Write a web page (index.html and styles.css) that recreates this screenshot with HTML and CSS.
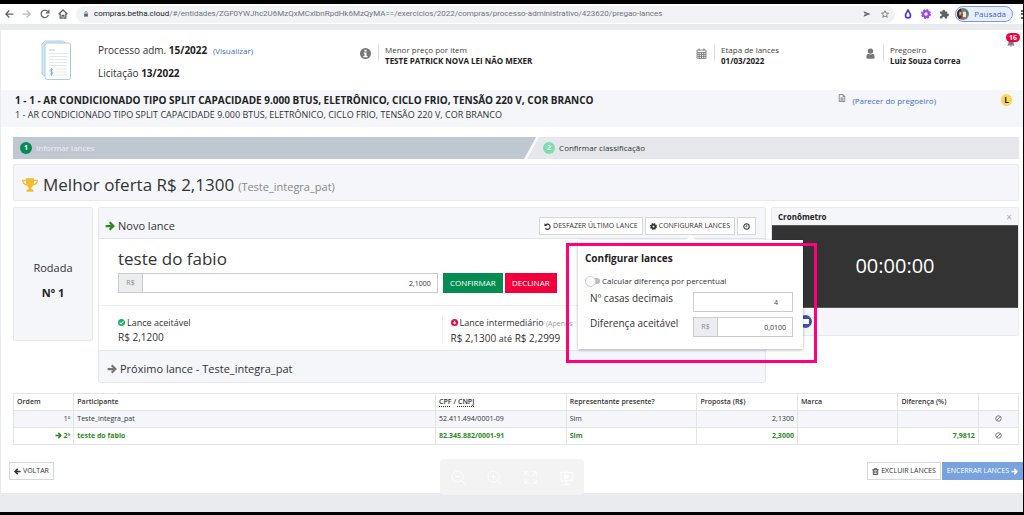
FILE: index.html
```html
<!DOCTYPE html>
<html lang="pt-BR">
<head>
<meta charset="utf-8">
<meta name="viewport" content="width=device-width, initial-scale=1">
<title>Pregão - Lances</title>
<link rel="stylesheet" href="styles.css">
</head>
<body>
<svg class="sprite" aria-hidden="true">
  <symbol id="arrow" viewBox="0 0 16 16"><path d="M1 8h12M7.500 2l6 6-6 6" fill="none" stroke="currentColor" stroke-width="3.600"/></symbol>
  <symbol id="ban" viewBox="0 0 16 16"><circle cx="8" cy="8" r="6.200" fill="none" stroke="currentColor" stroke-width="2"/><path d="M3.800 12.200l8.400-8.400" stroke="currentColor" stroke-width="2"/></symbol>
</svg>

<div class="browser">
  <button class="nav" aria-label="Voltar página"><svg viewBox="0 0 16 16"><path d="M15 8H3M8.500 2.500L3 8l5.500 5.500"/></svg></button>
  <button class="nav nav-off" aria-label="Avançar página"><svg viewBox="0 0 16 16"><path d="M1 8h12M7.500 2.500L13 8l-5.500 5.500"/></svg></button>
  <button class="nav" aria-label="Recarregar"><svg viewBox="0 0 16 16"><path d="M13.500 9.500A6 6 0 1 1 12.300 3.800L14 5.500M14.200 1v5H9.200"/></svg></button>
  <button class="nav" aria-label="Início"><svg viewBox="0 0 16 16"><path d="M1 8.500L8 1.500l7 7M3.500 7v7.500h3V10h3v4.500h3V7"/></svg></button>
  <div class="address">
    <svg class="lock" viewBox="0 0 16 16"><path d="M3 7h10v8H3z" fill="currentColor"/><path d="M5 7V4.500a3 3 0 0 1 6 0V7" fill="none" stroke="currentColor" stroke-width="1.800"/></svg>
    <span class="url"><span class="host">compras.betha.cloud</span>/#/entidades/ZGF0YWJhc2U6MzQxMCxlbnRpdHk6MzQyMA==/exercicios/2022/compras/processo-administrativo/423620/pregao-lances</span>
    <svg class="send" viewBox="0 0 16 16"><path d="M1 2.500L15 8 1 13.500 3 9l6-1-6-1z" fill="currentColor"/></svg>
    <svg class="star" viewBox="0 0 16 16"><path d="M8 1.500l2 4.600 5 .4-3.800 3.300 1.200 4.900L8 12.100l-4.400 2.600 1.200-4.900L1 6.500l5-.4z" fill="none" stroke="currentColor" stroke-width="1.500"/></svg>
  </div>
  <svg class="ext drop" viewBox="0 0 16 16"><path d="M8 2C6 5.500 4 7.500 4 10.200a4 4 0 0 0 8 0C12 7.500 10 5.500 8 2z" fill="none" stroke="currentColor" stroke-width="2.600"/></svg>
  <svg class="ext flower" viewBox="0 0 16 16"><circle cx="8" cy="8" r="4.500" fill="none" stroke="currentColor" stroke-width="3.400"/><circle cx="8" cy="8" r="6.600" fill="none" stroke="currentColor" stroke-width="2.600" stroke-dasharray="3.200 1.980"/></svg>
  <svg class="ext puzzle" viewBox="0 0 16 16"><path d="M1.500 4h4a2.200 2.200 0 1 1 4.200 0H13v3.500a2.200 2.200 0 1 1 0 4.200V15H9.300a2 2 0 1 0-3.800 0h-4v-3.800a2 2 0 1 0 0-3.700z" fill="currentColor"/></svg>
  <button class="profile"><svg viewBox="0 0 16 16"><circle cx="8" cy="8" r="8" fill="#76806b"/><path d="M0 8a8 8 0 0 1 5-7.400L7 9 4 15A8 8 0 0 1 0 8z" fill="#3d2b2b"/><path d="M3 5h3v5H3z" fill="#d9b3a0"/><path d="M8 5h4v7H8z" fill="#e9e9df"/><path d="M5 8h2v6H5z" fill="#a92c35"/><path d="M11 2l4 4-2 3z" fill="#4b7a3a"/></svg>Pausada</button>
  <span class="more" aria-hidden="true"></span>
</div>

<main class="page">
  <header class="summary">
    <div class="process">
      <svg class="doc" viewBox="0 0 30 40"><path d="M1 4l3-3h18.500l3 3v32H3.500L1 34z" fill="#d3e6f2" stroke="#b3d3e8"/><rect x="4" y="3" width="25.500" height="36.500" rx="2" fill="#fff" stroke="#a8cdee"/><path d="M8 10h6" stroke="#a8c8f0"/><path d="M8 13.500h18M8 16.500h18M8 19.500h18M8 22.500h18M8 25.500h18M15 29h11M15 32h11M15 35h11" stroke="#e3e7e9"/><path d="M12 29.500q-3-1-3 .9 0 1.300 1.500 1.400 1.800.2 1.500 1.600-.6 1.600-3.200.6M10.500 28v8" fill="none" stroke="#8ab9e8"/></svg>
      <div class="process-text">
        <div>Processo adm. <b>15/2022</b> <a class="view" href="#visualizar">(Visualizar)</a></div>
        <div>Licitação <b>13/2022</b></div>
      </div>
    </div>
    <div class="fact">
      <svg viewBox="0 0 16 16"><circle cx="8" cy="8" r="8" fill="#777"/><path d="M6.500 2.500h3v2.500h-3zM5.500 6.500h4v5h1.500v2h-6v-2h1.500v-3H5.500z" fill="#fff"/></svg>
      <div class="fact-text">Menor preço por item<b>TESTE PATRICK NOVA LEI NÃO MEXER</b></div>
    </div>
    <div class="fact">
      <svg viewBox="0 0 16 16"><path d="M1.500 3h13v12h-13zM1.500 6.500h13M1.500 9.300h13M1.500 12.100h13M4.700 6.500V15M8 6.500V15M11.300 6.500V15M4.500.500V4M11.500.500V4" fill="none" stroke="#777" stroke-width="1.300"/></svg>
      <div class="fact-text">Etapa de lances<b>01/03/2022</b></div>
    </div>
    <div class="fact">
      <svg viewBox="0 0 16 16"><circle cx="8" cy="4.500" r="3.900" fill="#777"/><path d="M2 14.500c0-4 .8-6 3-6.200q3 2 6 0c2.200.2 3 2.200 3 6.200q-1 1-2 1H4q-1.500 0-2-1z" fill="#777"/></svg>
      <div class="fact-text">Pregoeiro<b>Luiz Souza Correa</b></div>
    </div>
    <button class="bell" aria-label="Notificações"><svg viewBox="0 0 16 16"><path d="M8 1c4 0 5 3 5 6s1 4 2.500 6H.500C2 11 3 10 3 7s1-6 5-6zM6 14h4q-2 3-4 0z" fill="#777"/></svg><span class="count">16</span></button>
  </header>

  <section class="item">
    <div>
      <h1>1 - 1 - AR CONDICIONADO TIPO SPLIT CAPACIDADE 9.000 BTUS, ELETRÔNICO, CICLO FRIO, TENSÃO 220 V, COR BRANCO</h1>
      <p>1 - AR CONDICIONADO TIPO SPLIT CAPACIDADE 9.000 BTUS, ELETRÔNICO, CICLO FRIO, TENSÃO 220 V, COR BRANCO</p>
    </div>
    <div class="item-side">
      <svg viewBox="0 0 16 16"><path d="M2.500 1h7.500l3.500 3.500V15h-11zM10 1v4h3.500M5 8h6M5 10.200h6M5 12.400h6" fill="none" stroke="#777" stroke-width="1.600"/></svg>
      <a href="#parecer">(Parecer do pregoeiro)</a>
      <span class="tag">L</span>
    </div>
  </section>

  <div class="content">
    <ol class="steps">
      <li class="step step-now"><span class="num">1</span>Informar lances</li>
      <li class="step step-next"><span class="num">2</span>Confirmar classificação</li>
    </ol>

    <section class="best">
      <svg viewBox="0 0 18 16"><path d="M4.500.500h9V2H18c0 4-2 6-5.500 6.500C11.500 10 10.500 10.500 10.300 12q.2 1 1.700 1.200 1 .3 1 2.300H5q0-2 1-2.300 1.500-.2 1.700-1.200C7.500 10.500 6.500 10 5.500 8.500 2 8 0 6 0 2h4.500zM1.500 3.500q.5 2.700 3.300 3.300-.4-1.500-.4-3.300zM16.500 3.500h-2.900q0 1.800-.4 3.300 2.800-.6 3.300-3.300z" fill="#f4bd2c"/></svg>
      <span>Melhor oferta R$ 2,1300</span> <small>(Teste_integra_pat)</small>
    </section>

    <div class="board">
      <aside class="round"><span>Rodada</span><b>Nº 1</b></aside>

      <section class="bid">
        <header class="bid-head">
          <h2><svg class="go"><use href="#arrow"/></svg>Novo lance</h2>
          <div class="tools">
            <button class="btn"><svg viewBox="0 0 16 16"><path d="M3.500 4.500A6 6 0 1 1 3 12" fill="none" stroke="currentColor" stroke-width="2.600"/><path d="M1 .500V7h6.500z" fill="currentColor"/></svg>DESFAZER ÚLTIMO LANCE</button>
            <div class="anchor">
              <button class="btn" aria-expanded="true"><svg viewBox="0 0 16 16"><circle cx="8" cy="8" r="4.200" fill="none" stroke="currentColor" stroke-width="4"/><circle cx="8" cy="8" r="6.800" fill="none" stroke="currentColor" stroke-width="2.400" stroke-dasharray="3 2.340"/></svg>CONFIGURAR LANCES</button>
              <div class="popover" role="dialog" aria-labelledby="cfg">
                <h3 id="cfg">Configurar lances</h3>
                <label class="switch"><input type="checkbox">Calcular diferença por percentual</label>
                <div class="field"><label for="decimals">Nº casas decimais</label><input class="box decimals" id="decimals" value="4"></div>
                <div class="field"><label for="diff">Diferença aceitável</label><span class="group"><span class="prefix">R$</span><input class="box" id="diff" value="0,0100"></span></div>
                <span class="marker"></span>
              </div>
            </div>
            <button class="btn btn-icon" aria-label="Histórico"><svg viewBox="0 0 16 16"><circle cx="8" cy="8" r="6.200" fill="none" stroke="currentColor" stroke-width="2.400"/><path d="M8.500 4v4.500H5.500" fill="none" stroke="currentColor" stroke-width="1.800"/></svg></button>
          </div>
        </header>
        <form class="bid-form">
          <label for="bid">teste do fabio</label>
          <div class="bid-row">
            <span class="group"><span class="prefix">R$</span><input class="box" id="bid" value="2,1000"></span>
            <button type="button" class="act act-ok">CONFIRMAR</button>
            <button type="button" class="act act-no">DECLINAR</button>
          </div>
        </form>
        <div class="limits">
          <div class="limit">
            <div><svg viewBox="0 0 16 16"><circle cx="8" cy="8" r="8" fill="#19b56b"/><path d="M4 8l3 3 5.500-5.500" fill="none" stroke="#fff" stroke-width="2.400"/></svg>Lance aceitável</div>
            <div class="amount">R$ 2,1200</div>
          </div>
          <div class="limit limit-mid">
            <div><svg viewBox="0 0 16 16"><circle cx="8" cy="8" r="8" fill="#f0003c"/><path d="M8 12.500L3.500 8h3V4h3v4h3z" fill="#fff"/></svg>Lance intermediário <small>(Apenas</small></div>
            <div class="amount">R$ 2,1300 <span>até</span> R$ 2,2999</div>
          </div>
        </div>
        <footer class="bid-next"><svg><use href="#arrow"/></svg>Próximo lance - Teste_integra_pat</footer>
      </section>

      <section class="timer">
        <header><b>Cronômetro</b><button class="close" aria-label="Fechar">×</button></header>
        <div class="clock">00:00:00</div>
        <footer><button class="stop" aria-label="Parar"><svg viewBox="0 0 13 13"><circle cx="6.500" cy="6.500" r="6.500" fill="#3f51b5"/><rect x="3" y="4" width="7" height="5" fill="#fff"/></svg></button></footer>
      </section>
    </div>

    <table class="ranking">
      <colgroup><col class="c-order"><col class="c-name"><col class="c-doc"><col class="c-rep"><col class="c-prop"><col class="c-brand"><col class="c-diff"><col class="c-act"></colgroup>
      <thead><tr><th>Ordem</th><th>Participante</th><th><abbr title="Cadastro de Pessoas Físicas">CPF</abbr> / <abbr title="Cadastro Nacional da Pessoa Jurídica">CNPJ</abbr></th><th>Representante presente?</th><th>Proposta (R$)</th><th>Marca</th><th>Diferença (%)</th><th></th></tr></thead>
      <tbody>
        <tr><td class="r">1º</td><td>Teste_integra_pat</td><td>52.411.494/0001-09</td><td>Sim</td><td class="r">2,1300</td><td></td><td></td><td class="ban"><svg><use href="#ban"/></svg></td></tr>
        <tr class="current"><td class="r"><svg><use href="#arrow"/></svg> 2º</td><td>teste do fabio</td><td>82.345.882/0001-91</td><td>Sim</td><td class="r">2,3000</td><td></td><td class="r">7,9812</td><td class="ban"><svg><use href="#ban"/></svg></td></tr>
      </tbody>
    </table>
  </div>

  <footer class="actions">
    <button class="btn"><svg class="flip"><use href="#arrow"/></svg>VOLTAR</button>
    <div class="actions-end">
      <button class="btn"><svg viewBox="0 0 16 16"><path d="M1 4h14M5.500 4V1.500h5V4M3 4v11h10V4M6.300 6.500v6M9.700 6.500v6" fill="none" stroke="currentColor" stroke-width="1.900"/></svg>EXCLUIR LANCES</button>
      <button class="btn btn-blue">ENCERRAR LANCES<svg><use href="#arrow"/></svg></button>
    </div>
  </footer>
</main>

<div class="viewer">
  <button aria-label="Diminuir zoom"><svg viewBox="0 0 16 16"><circle cx="7" cy="7" r="6"/><path d="M11.500 11.500l4 4M4 7h6"/></svg></button>
  <button aria-label="Aumentar zoom"><svg viewBox="0 0 16 16"><circle cx="7" cy="7" r="6"/><path d="M11.500 11.500l4 4M4 7h6M7 4v6"/></svg></button>
  <button aria-label="Tela cheia"><svg viewBox="0 0 16 16"><path d="M2 6V2h4M2 2l4 4M10 2h4v4M14 2l-4 4M2 10v4h4M2 14l4-4M14 10v4h-4M14 14l-4-4"/></svg></button>
  <button aria-label="Apresentar"><svg viewBox="0 0 16 16"><path d="M1 2.500h14M2 2.500v9h12v-9M8 .500v2M8 11.500v4M4.500 15.500h7"/><path class="solid" d="M6 4.500v5L10.500 7z"/></svg></button>
</div>
</body>
</html>
```
FILE: styles.css
```css
* { box-sizing: border-box; }

body {
  margin: 0;
  min-height: 100vh;
  display: flex;
  flex-direction: column;
  border: solid #000;
  border-width: 4px 1px 3px 0;
  background: #e9ebef;
  color: #333;
  font: 10px/14px "Open Sans", "Noto Sans", sans-serif;
}

button, input { font: inherit; color: inherit; }
button { border: 0; padding: 0; background: none; cursor: pointer; }
h1, h2, h3, p, ol { margin: 0; padding: 0; font-weight: 400; }
a { color: #3f6fc4; text-decoration: none; }
b { color: #222; }
svg { flex: none; }
.sprite { position: absolute; width: 0; height: 0; }

/* Browser bar */
.browser {
  display: flex;
  align-items: center;
  height: 20px;
  padding-left: 4px;
  background: #fff;
  color: #5f6368;
}
.nav { width: 18px; height: 10px; display: flex; justify-content: flex-start; }
.nav svg { width: 10px; height: 10px; fill: none; stroke: currentColor; stroke-width: 2; }
.nav-off { color: #bbb; }
.address {
  flex: 1;
  display: flex;
  align-items: center;
  gap: 10px;
  height: 17px;
  padding: 0 6px 0 7px;
  border-radius: 9px;
  background: #f1f3f4;
  font: 8px/16px Roboto, "Open Sans", sans-serif;
}
.lock { width: 6px; height: 8px; margin-right: -5px; }
.url { flex: 1; overflow: hidden; white-space: nowrap; color: #70757a; }
.host { color: #202124; }
.send, .star { width: 8px; height: 8px; }
.ext { width: 10px; height: 10px; margin-left: 8px; }
.drop { color: #4a2be0; }
.flower { color: #a144f0; }
.profile {
  display: flex;
  align-items: center;
  gap: 5px;
  height: 16px;
  margin: 0 8px 0 6px;
  padding: 0 6px 0 1px;
  border: 1px solid #7d9be0;
  border-radius: 8px;
  background: #e8effc;
  color: #4464cf;
  font-size: 8px;
}
.profile svg { width: 12px; height: 12px; }
.more { width: 2px; border-left: 2px dotted #5f6368; height: 9px; }

/* Page */
.page { margin: 6px 0 0 1px; background: #fff; }

.summary {
  position: relative;
  display: grid;
  grid-template-columns: 359fr 336fr 169fr 158fr;
  height: 60px;
}
.process { display: flex; gap: 27px; padding: 10px 0 0 40px; }
.doc { width: 30px; height: 40px; }
.process-text { display: grid; align-content: start; gap: 8px; padding-top: 3px; font-size: 10px; }
.view { margin-left: 3px; font-size: 8px; }
.fact { display: flex; align-items: flex-start; gap: 7px; padding-top: 14px; }
.fact svg { width: 11px; height: 11px; margin-top: 4px; }
.fact-text { padding-left: 6px; border-left: 1px solid #ddd; font-size: 8px; line-height: 11px; height: 17px; color: #444; }
.fact-text b { display: block; }
.bell { position: absolute; top: 3px; right: 3px; width: 14px; height: 14px; }
.bell svg { position: absolute; left: 1px; bottom: 0; width: 8px; height: 8px; }
.count {
  position: absolute;
  top: 0;
  right: 0;
  padding: 0 3px;
  border-radius: 5px;
  background: #f0003c;
  color: #fff;
  font-size: 7px;
  line-height: 9px;
  font-weight: 700;
}

.item {
  display: flex;
  justify-content: space-between;
  padding: 3px 11px 5px 14px;
  background: #f4f6fa;
}
.item h1 { font-size: 10px; line-height: 15px; font-weight: 700; color: #222; }
.item p { font-size: 9px; line-height: 14px; }
.item-side { display: flex; align-items: flex-start; padding-top: 1px; font-size: 8px; }
.item-side svg { width: 8px; height: 8px; margin-right: 6px; }
.tag {
  width: 11px;
  height: 12px;
  margin-left: 65px;
  border-radius: 6px;
  background: #fbd55e;
  color: #222;
  font-weight: 700;
  line-height: 12px;
  text-align: center;
}

.content { padding: 10px 4px 0 12px; }

.steps { display: flex; height: 22px; list-style: none; background: #f8f9fb; font-size: 8px; }
.step { display: flex; align-items: center; gap: 4px; }
.step-now {
  flex: 0 0 52%;
  padding-left: 7px;
  background: #bfc7d1;
  color: #edf0f3;
  clip-path: polygon(0 0, 100% 0, calc(100% - 12px) 100%, 0 100%);
}
.step-next {
  flex: 1;
  padding-left: 19px;
  margin-left: -12px;
  background: #e5e7ec;
  clip-path: polygon(15px 0, 100% 0, 100% 100%, 3px 100%);
}
.num {
  width: 12px;
  height: 12px;
  border-radius: 50%;
  background: #058c56;
  color: #fff;
  font-size: 7px;
  line-height: 12px;
  font-weight: 700;
  text-align: center;
}
.step-next .num { background: #7ddfaa; }

.best, .round, .bid, .timer { border: 1px solid #e7e9ee; border-radius: 2px; background: #f4f6fa; }
.best {
  display: flex;
  align-items: center;
  height: 37px;
  margin-top: 5px;
  padding: 5px 8px 0;
  font-size: 17px;
  line-height: 22px;
}
.best svg { width: 16px; height: 16px; margin-right: 5px; }
.best small { margin: 4px 0 0 4px; font-size: 11px; color: #888; }

.board {
  display: grid;
  grid-template-columns: 80px 1fr 248px;
  gap: 5px;
  align-items: start;
  margin-top: 6px;
}
.round {
  display: grid;
  align-content: center;
  justify-items: center;
  gap: 11px;
  height: 134px;
  padding-top: 12px;
  font-size: 11px;
}

.bid-head {
  display: flex;
  align-items: center;
  justify-content: space-between;
  height: 31px;
  padding: 6px 9px 0 6px;
  border-bottom: 1px solid #e0e2e6;
}
.bid-head h2 { display: flex; align-items: center; gap: 3px; font-size: 11px; }
.go, .bid-next svg { width: 10px; height: 10px; }
.go { color: #2c8a1f; }
.tools { display: flex; gap: 2px; }
.anchor { position: relative; }

.btn {
  display: flex;
  align-items: center;
  justify-content: center;
  gap: 2px;
  height: 18px;
  padding: 0 4px;
  border: 1px solid #d5d7da;
  background: #fff;
  color: #333;
  font-size: 7px;
  white-space: nowrap;
}
.btn svg { width: 7px; height: 7px; }
.btn-icon { width: 19px; padding: 0; }
.btn-blue { border-color: #79a3df; background: #79a3df; color: #fff; }
.flip { transform: rotate(180deg); }

.popover {
  position: absolute;
  z-index: 2;
  top: 23px;
  right: -68px;
  width: 225px;
  height: 109px;
  padding: 10px 10px 0 7px;
  background: #fff;
  box-shadow: 0 1px 3px rgba(0, 0, 0, .3);
}
.popover::before {
  content: "";
  position: absolute;
  top: -5px;
  left: 108px;
  border: solid transparent;
  border-width: 0 5px 5px;
  border-bottom-color: #fff;
}
.popover h3 { font-size: 10px; line-height: 16px; font-weight: 700; color: #222; }
.switch { display: flex; align-items: center; gap: 2px; height: 14px; margin: 8px 0 4px; font-size: 8px; }
.switch input {
  appearance: none;
  width: 15px;
  height: 6px;
  margin: 0;
  border-radius: 3px;
  background: #bbb;
}
.switch input::before {
  content: "";
  display: block;
  width: 9px;
  height: 9px;
  margin-top: -2px;
  border: 1px solid #ccc;
  border-radius: 50%;
  background: #fff;
}
.field {
  display: grid;
  grid-template-columns: 1fr 100px;
  height: 20px;
  margin-bottom: 5px;
  padding-left: 5px;
  font-size: 10px;
  line-height: 12px;
}
.marker {
  position: absolute;
  top: 3px;
  right: -14px;
  bottom: -14px;
  left: -12px;
  border: 3px solid #ff007f;
  pointer-events: none;
}

.group { display: flex; }
.prefix {
  display: flex;
  align-items: center;
  justify-content: center;
  flex: 0 0 24px;
  border: 1px solid #ccc;
  border-right: 0;
  background: #ebedf0;
  color: #888;
  font-size: 7px;
}
.box {
  flex: 1;
  width: 100%;
  min-width: 0;
  height: 20px;
  padding: 0 6px;
  border: 1px solid #ccc;
  background: #fff;
  font-size: 7px;
  text-align: right;
}
.decimals { padding-right: 14px; color: #345; }

.bid-form { padding: 9px 20px 12px 19px; border-bottom: 1px solid #f0f0f2; background: #fff; }
.bid-form label { display: block; font-size: 17px; line-height: 22px; }
.bid-row { display: flex; gap: 2px; margin-top: 3px; }
.bid-row .group { flex: 0 0 51%; margin-right: 3px; }
.act { height: 20px; color: #fff; font-size: 8px; }
.act-ok { width: 60px; background: #058c50; }
.act-no { width: 52px; background: #f2003c; }

.limits { display: flex; height: 44px; padding: 10px 0 6px 19px; background: #fff; font-size: 9px; line-height: 14px; }
.limit { flex: 0 0 50%; white-space: nowrap; }
.limit-mid { padding-left: 8px; border-left: 1px solid #eee; }
.limit svg { width: 7px; height: 7px; margin-right: 2px; }
.limit small { color: #999; font-size: 7px; }
.amount { font-size: 10px; }
.amount span { font-size: 9px; }
.bid-next {
  display: flex;
  align-items: center;
  gap: 3px;
  height: 32px;
  padding: 4px 8px 0;
  border-top: 1px solid #e7e9ee;
  font-size: 11px;
}
.bid-next svg { color: #777; }

.timer header { display: flex; align-items: center; justify-content: space-between; height: 17px; padding: 0 6px; font-size: 8px; }
.close { color: #aaa; font-size: 10px; line-height: 14px; }
.clock {
  height: 83px;
  border: solid #555;
  border-width: 1px 0;
  background: #333;
  color: #fff;
  font-size: 20px;
  line-height: 79px;
  text-align: center;
}
.timer footer { height: 27px; padding: 7px 0 0 27px; }
.stop { display: block; }
.stop svg { display: block; width: 13px; height: 13px; }

.ranking { width: 100%; margin-top: 10px; border-collapse: collapse; table-layout: fixed; font-size: 7px; line-height: 10px; }
.c-order { width: 6%; }
.c-name { width: 36%; }
.c-doc { width: 13%; }
.c-rep { width: 13%; }
.c-prop { width: 10%; }
.c-brand { width: 10%; }
.c-diff { width: 8%; }
.c-act { width: 4%; }
.ranking th, .ranking td { height: 17px; padding: 3px; border: 1px solid #e2e4e8; text-align: left; white-space: nowrap; }
.ranking th { font-weight: 600; }
.ranking tbody tr:first-child { background: #f4f6fa; }
.ranking .current { color: #2c8a1f; font-weight: 700; }
.ranking .r { text-align: right; }
.ranking .ban { color: #666; text-align: center; }
.ranking svg { width: 7px; height: 7px; vertical-align: -1px; }
abbr { text-decoration: underline dotted; text-underline-offset: 2px; }

.actions { display: flex; justify-content: space-between; padding: 17px 0 13px 8px; }
.actions-end { display: flex; gap: 1px; }

/* Floating viewer controls */
.viewer {
  position: fixed;
  bottom: 20px;
  left: 50%;
  display: flex;
  align-items: center;
  justify-content: space-around;
  width: 144px;
  height: 36px;
  border-radius: 4px;
  background: #f3f3f3;
  transform: translateX(-50%);
}
.viewer svg { display: block; width: 15px; height: 15px; fill: none; stroke: #fff; stroke-width: 1; }
.viewer .solid { fill: #fff; }
```
